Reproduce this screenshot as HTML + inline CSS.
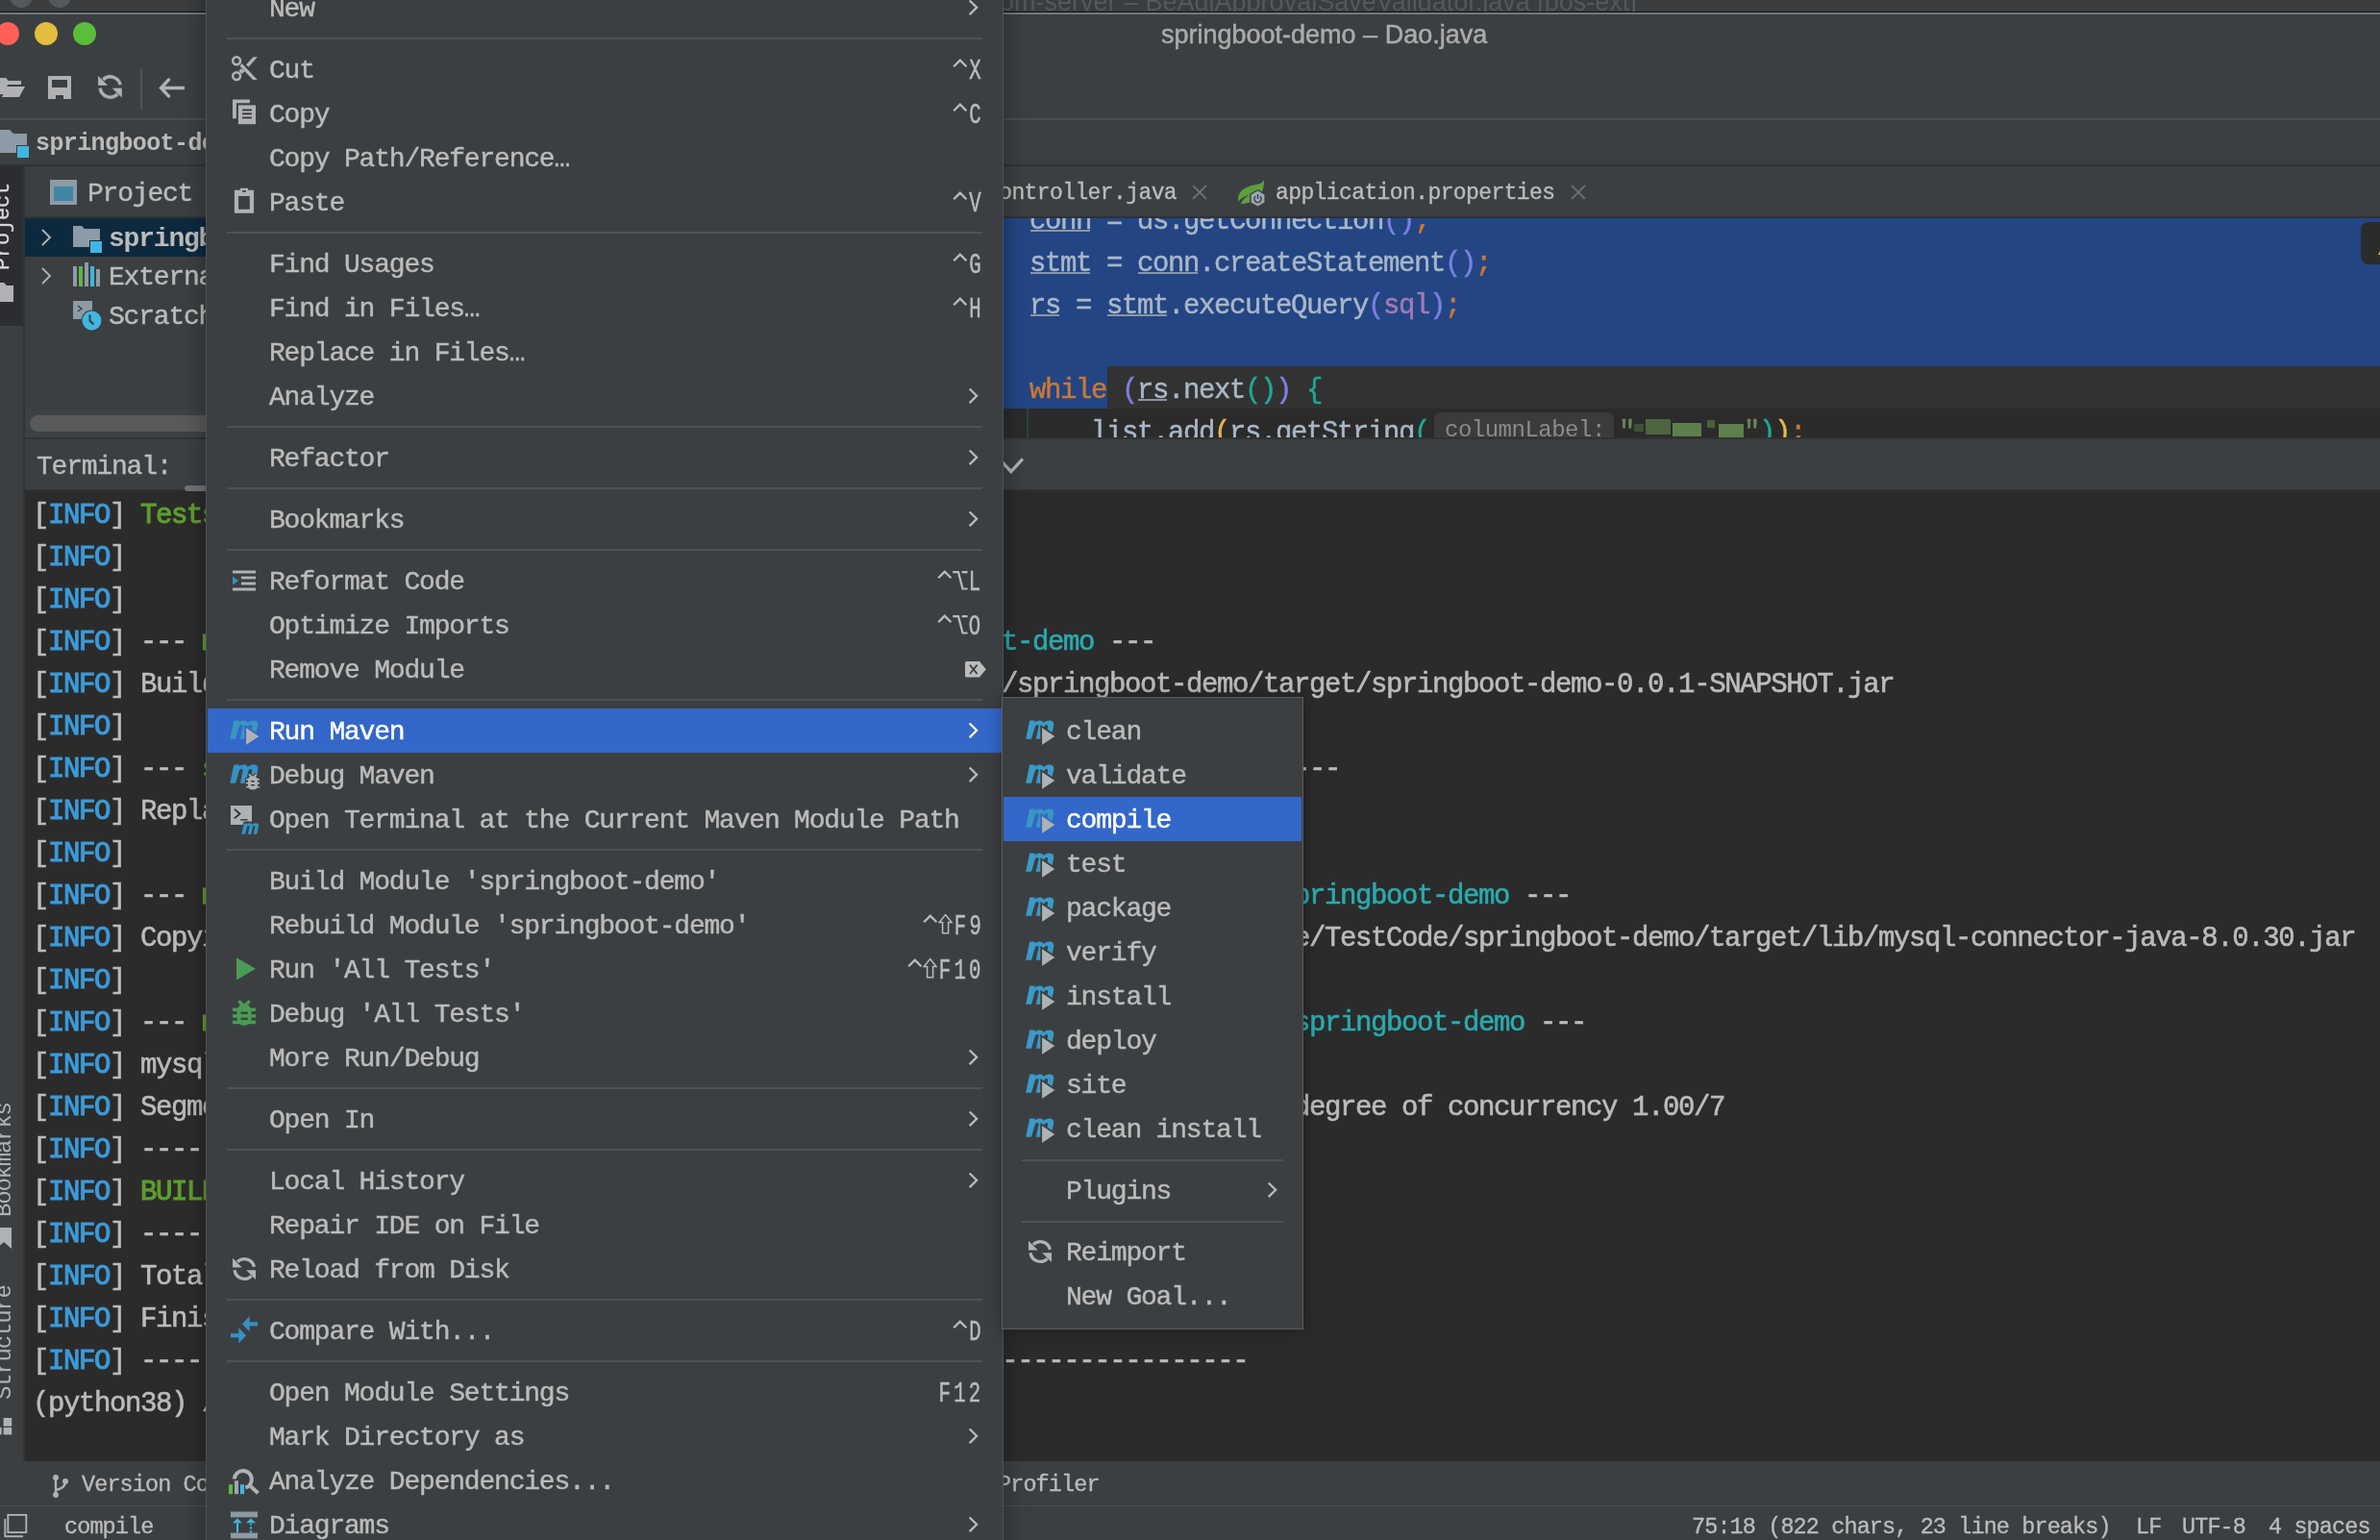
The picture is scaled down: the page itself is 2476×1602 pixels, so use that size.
<!DOCTYPE html><html><head><meta charset="utf-8"><title>IDE</title><style>
*{margin:0;padding:0;box-sizing:border-box}
html,body{width:2476px;height:1602px;overflow:hidden;background:#3C3F41}
body{position:relative;font-family:"Liberation Mono",monospace;color:#BBBBBB;-webkit-font-smoothing:antialiased}
.a{will-change:transform}
.a{position:absolute}
.sans{font-family:"Liberation Sans",sans-serif}
.mt{height:46px;line-height:46px;font-size:28px;letter-spacing:-1.2px;white-space:pre;padding-top:2px;-webkit-text-stroke:0.45px currentColor}
.tt{height:44px;line-height:44px;font-size:29px;letter-spacing:-1.4px;white-space:pre;color:#BBBBBB;padding-top:3.5px;-webkit-text-stroke:0.6px currentColor}
.et{height:44px;line-height:44px;font-size:29px;letter-spacing:-1.4px;white-space:pre;padding-top:4px;-webkit-text-stroke:0.45px currentColor}
.ib{color:#3C9AD9;-webkit-text-stroke:1.1px currentColor}
.gr{color:#5E9E2E;-webkit-text-stroke:1.1px currentColor}
.cy{color:#2AABAD}
.st{height:36px;line-height:36px;font-size:23.5px;letter-spacing:-0.9px;white-space:pre;color:#BBBBBB;-webkit-text-stroke:0.35px currentColor}
</style></head><body>
<div class="a" style="left:0;top:0;width:2476px;height:12px;background:#3A3C3E;overflow:hidden"><div class="a" style="left:10px;top:-16px;width:24px;height:24px;border-radius:50%;background:#55585A"></div><div class="a" style="left:50px;top:-16px;width:24px;height:24px;border-radius:50%;background:#55585A"></div><div class="a sans" style="left:1040px;top:-13px;font-size:27px;color:#55585A;white-space:pre">om-server – BeAdjApprovalSaveValidator.java [pos-ext]</div></div>
<div class="a" style="left:0;top:12px;width:2476px;height:1px;background:#141414"></div>
<div class="a" style="left:0;top:13px;width:2476px;height:2px;background:#76787A"></div>
<div class="a" style="left:-4px;top:23px;width:24px;height:24px;border-radius:50%;background:#FE5F57"></div>
<div class="a" style="left:36px;top:23px;width:24px;height:24px;border-radius:50%;background:#E4BC3F"></div>
<div class="a" style="left:76px;top:23px;width:24px;height:24px;border-radius:50%;background:#59BF3B"></div>
<div class="a sans" style="left:1208px;top:19.5px;font-size:27px;line-height:32px;color:#ABABAB;white-space:pre;-webkit-text-stroke:0.5px currentColor">springboot-demo – Dao.java</div>
<div class="a" style="left:0;top:79px;width:28px;height:24px"><svg width="28" height="24" viewBox="0 0 28 24"><path d="M-4,2 H6 L9,5 H22 V9 H8 L4,19 H-4Z" fill="#AFB1B3"/><path d="M2,22 L7,11 H26 L20,22Z" fill="#AFB1B3"/></svg></div>
<div class="a" style="left:50px;top:79px;width:25px;height:25px"><svg width="25" height="25" viewBox="0 0 25 25"><path d="M0,0 H24 V24 H0Z M4,4 V12 H20 V4Z M8,20 V24 H16 V20Z" fill="#AFB1B3" fill-rule="evenodd"/></svg></div>
<div class="a" style="left:98px;top:73.5px;width:32px;height:32px;transform:scale(1.03);transform-origin:4px 5px"><svg width="32" height="32" viewBox="0 0 32 32"><g fill="none" stroke="#AFB1B3" stroke-width="3.3"><path d="M9.0,8.7 A10.3,10.3 0 0 1 26.4,13.9"/><path d="M6.07,17.2 A10.3,10.3 0 0 0 23.6,23.3"/></g><path d="M4,4.8 L4,14.6 L13.8,14.6Z M28,17.3 L28,27 L18.1,17.3Z" fill="#AFB1B3"/></svg></div>
<div class="a" style="left:146px;top:71px;width:2px;height:44px;background:#515355"></div>
<div class="a" style="left:165px;top:80px;width:28px;height:23px"><svg width="28" height="23" viewBox="0 0 28 23"><path d="M11.5,1.8 L2.5,11.5 L11.5,21.2 M3,11.5 H27" fill="none" stroke="#AFB1B3" stroke-width="3.4"/></svg></div>
<div class="a" style="left:0;top:123px;width:2476px;height:2px;background:#4A4C4E"></div>
<div class="a" style="left:0;top:171px;width:2476px;height:2px;background:#2F3133"></div>
<div class="a" style="left:0;top:135px;width:30px;height:30px"><svg width="30" height="30" viewBox="0 0 30 30"><path d="M-2,0 H10 L14,4 H28 V24 H-2Z" fill="#8C9BA5"/><rect x="17" y="16" width="13" height="13" fill="#3C3F41"/><rect x="18" y="17" width="12" height="12" fill="#40B6E0"/></svg></div>
<div class="a" style="left:37px;top:131px;height:38px;line-height:38px;font-size:25px;font-weight:bold;letter-spacing:-0.6px;white-space:pre;color:#BBBBBB">springboot-demo</div>
<div class="a" style="left:0;top:173px;width:24px;height:1347px;background:#3C3F41"></div>
<div class="a" style="left:0;top:173px;width:24px;height:166px;background:#2B2D30"></div>
<div class="a" style="left:24px;top:173px;width:2px;height:1347px;background:#313335"></div>
<div class="a" style="left:-6px;top:281px;width:0;height:0"><div style="transform:rotate(-90deg);transform-origin:0 0;font-size:22px;letter-spacing:-0.2px;white-space:pre;color:#D8D8D8;line-height:20px;-webkit-text-stroke:0.3px currentColor">Project</div></div>
<div class="a" style="left:0;top:294px;width:14px;height:20px"><svg width="14" height="20"><path d="M-2,0 H4 L7,3 H14 V20 H-2Z" fill="#AFB1B3"/></svg></div>
<div class="a" style="left:-3px;top:1266px;width:0;height:0"><div style="transform:rotate(-90deg);transform-origin:0 0;font-size:24px;letter-spacing:-1.2px;white-space:pre;color:#AFB1B3;line-height:16px;">Bookmarks</div></div>
<div class="a" style="left:0;top:1277px;width:12px;height:22px"><svg width="12" height="22"><path d="M-4,0 H12 V22 L4,15 L-4,22Z" fill="#AFB1B3"/></svg></div>
<div class="a" style="left:-3px;top:1456px;width:0;height:0"><div style="transform:rotate(-90deg);transform-origin:0 0;font-size:24px;letter-spacing:-1.2px;white-space:pre;color:#AFB1B3;line-height:16px;">Structure</div></div>
<div class="a" style="left:0;top:1462px;width:14px;height:32px"><svg width="14" height="32"><rect x="3.6" y="13" width="8.6" height="8.7" fill="#AFB1B3"/><rect x="-6" y="23" width="7.7" height="7.4" fill="#AFB1B3"/><rect x="3.6" y="23" width="8.6" height="7.4" fill="#AFB1B3"/></svg></div>
<div class="a" style="left:26px;top:173px;width:1100px;height:282px;background:#3C3F41"></div>
<div class="a" style="left:52px;top:187px;width:28px;height:26px"><svg width="28" height="26"><rect x="0" y="0" width="28" height="26" fill="#8C9BA5"/><rect x="4" y="7" width="20" height="15" fill="#3F86A5"/></svg></div>
<div class="a mt" style="left:91px;top:177px;">Project</div>
<div class="a" style="left:26px;top:225px;width:1100px;height:2px;background:#323436"></div>
<div class="a" style="left:26px;top:227px;width:1100px;height:40px;background:#0D293E"></div>
<div class="a" style="left:42px;top:237px;width:14px;height:22px"><svg width="14" height="22"><path d="M2,2 L10,10 L2,18" fill="none" stroke="#AFB1B3" stroke-width="1.9"/></svg></div>
<div class="a" style="left:76px;top:235px;width:32px;height:28px"><svg width="32" height="28"><path d="M0,0 H9 L12,3 H28 V22 H0Z" fill="#8C9BA5"/><rect x="17" y="15" width="15" height="13" fill="#0D293E"/><rect x="18" y="16" width="12" height="12" fill="#40B6E0"/></svg></div>
<div class="a" style="left:113px;top:227px;height:40px;line-height:40px;font-size:28px;font-weight:bold;letter-spacing:-1.2px;white-space:pre;color:#BBBBBB;padding-top:2px">springboot-demo</div>
<div class="a" style="left:42px;top:277px;width:14px;height:22px"><svg width="14" height="22"><path d="M2,2 L10,10 L2,18" fill="none" stroke="#AFB1B3" stroke-width="1.9"/></svg></div>
<div class="a" style="left:76px;top:273px;width:30px;height:26px"><svg width="30" height="26"><rect x="0" y="4" width="4" height="21" fill="#8C9BA5"/><rect x="6" y="4" width="4" height="21" fill="#62B543"/><rect x="12" y="0" width="4" height="25" fill="#8C9BA5"/><rect x="18" y="4" width="4" height="21" fill="#40B6E0"/><rect x="24" y="7" width="4" height="18" fill="#8C9BA5"/></svg></div>
<div class="a mt" style="left:113px;top:264px;">External Libraries</div>
<div class="a" style="left:76px;top:313px;width:32px;height:32px"><svg width="32" height="32"><rect x="0" y="0" width="20" height="19" fill="#8C9BA5"/><path d="M5,5 L9,8 L5,11" fill="none" stroke="#3C3F41" stroke-width="1.3"/><circle cx="19.5" cy="20.5" r="11" fill="#3C3F41"/><circle cx="19.5" cy="20.5" r="10" fill="#40B6E0"/><path d="M17.5,14.5 V20.5 L21.5,24.5" fill="none" stroke="#3C3F41" stroke-width="2"/></svg></div>
<div class="a mt" style="left:113px;top:305px;">Scratches and Consoles</div>
<div class="a" style="left:26px;top:427px;width:1100px;height:28px;background:#3E4143"></div>
<div class="a" style="left:31px;top:432px;width:1000px;height:17px;border-radius:9px;background:#57595B"></div>
<div class="a" style="left:1044px;top:173px;width:1432px;height:52px;background:#3C3F41"></div>
<div class="a" style="left:1026px;top:181px;height:40px;line-height:40px;font-size:23px;letter-spacing:-0.6px;white-space:pre;color:#BBBBBB;-webkit-text-stroke:0.35px currentColor">Controller.java</div>
<div class="a" style="left:1240px;top:192px;width:16px;height:16px"><svg width="16" height="16"><path d="M1,1 L15,15 M15,1 L1,15" stroke="#6E6E6E" stroke-width="1.8"/></svg></div>
<div class="a" style="left:1287px;top:186px;width:32px;height:32px"><svg width="32" height="32" viewBox="0 0 32 32"><path d="M28,1 C26,7 16,5 8,10 C1,14 0.5,20 1.5,24 C4,19.5 9,17.5 13,16.5 C8,19.5 5,22.5 4,26 C15,26 29,19 28,1Z" fill="#5E9E3C"/><path d="M21.5,11 L29.8,15.8 V25.4 L21.5,30.2 L13.2,25.4 V15.8Z" fill="#3C3F41"/><path d="M21.5,12.6 L28.4,16.6 V24.6 L21.5,28.6 L14.6,24.6 V16.6Z" fill="#9AA7B0"/><path d="M19,18.3 A3.6,3.6 0 1 0 24,18.3" fill="none" stroke="#3C3F41" stroke-width="1.4"/><path d="M21.5,16 V21" stroke="#3C3F41" stroke-width="1.4"/></svg></div>
<div class="a" style="left:1327px;top:181px;height:40px;line-height:40px;font-size:23px;letter-spacing:-0.6px;white-space:pre;color:#BBBBBB;-webkit-text-stroke:0.35px currentColor">application.properties</div>
<div class="a" style="left:1634px;top:192px;width:16px;height:16px"><svg width="16" height="16"><path d="M1,1 L15,15 M15,1 L1,15" stroke="#6E6E6E" stroke-width="1.8"/></svg></div>
<div class="a" style="left:1044px;top:225px;width:1432px;height:2px;background:#2F3133"></div>
<div class="a" style="left:1044px;top:227px;width:1432px;height:228px;background:#2B2B2B;overflow:hidden">
<div class="a" style="left:0;top:0;width:1432px;height:154px;background:#234584"></div>
<div class="a" style="left:108px;top:154px;width:1324px;height:44px;background:#323232"></div>
<div class="a" style="left:0;top:154px;width:108px;height:44px;background:#234584"></div>
<div class="a" style="left:24px;top:198px;width:2px;height:30px;background:#2B4440"></div>
<div class="a" style="left:1412px;top:4px;width:40px;height:44px;border-radius:8px;background:#2B2B2B"></div>
<div class="a" style="left:1430px;top:30px;width:8px;height:8px;background:#E8B537;clip-path:polygon(50% 0,100% 100%,0 100%)"></div>
<div class="a" style="left:448px;top:202px;width:187px;height:40px;border-radius:6px;background:#3B3B3B"></div>
</div>
<div class="a" style="left:1044px;top:227px;width:1432px;height:228px;overflow:hidden"><div class="a" style="left:-1044px;top:-227px;width:2476px;height:1602px">
<div class="a et" style="left:1071px;top:205px;color:#A9B7C6">conn</div>
<div class="a" style="left:1072px;top:239px;width:62px;height:2px;background:#8A96A3"></div>
<div class="a et" style="left:1151px;top:205px;color:#A9B7C6">=</div>
<div class="a et" style="left:1183px;top:205px;color:#A9B7C6">ds.getConnection</div>
<div class="a et" style="left:1439px;top:205px;color:#7C7FE0">()</div>
<div class="a et" style="left:1471px;top:205px;color:#CC7832">;</div>
<div class="a et" style="left:1071px;top:249px;color:#A9B7C6">stmt</div>
<div class="a" style="left:1072px;top:283px;width:62px;height:2px;background:#8A96A3"></div>
<div class="a et" style="left:1151px;top:249px;color:#A9B7C6">=</div>
<div class="a et" style="left:1183px;top:249px;color:#A9B7C6">conn</div>
<div class="a" style="left:1184px;top:283px;width:62px;height:2px;background:#8A96A3"></div>
<div class="a et" style="left:1247px;top:249px;color:#A9B7C6">.createStatement</div>
<div class="a et" style="left:1503px;top:249px;color:#7C7FE0">()</div>
<div class="a et" style="left:1535px;top:249px;color:#CC7832">;</div>
<div class="a et" style="left:1071px;top:293px;color:#A9B7C6">rs</div>
<div class="a" style="left:1072px;top:327px;width:30px;height:2px;background:#8A96A3"></div>
<div class="a et" style="left:1119px;top:293px;color:#A9B7C6">=</div>
<div class="a et" style="left:1151px;top:293px;color:#A9B7C6">stmt</div>
<div class="a" style="left:1152px;top:327px;width:62px;height:2px;background:#8A96A3"></div>
<div class="a et" style="left:1215px;top:293px;color:#A9B7C6">.executeQuery</div>
<div class="a et" style="left:1423px;top:293px;color:#7C7FE0">(</div>
<div class="a et" style="left:1439px;top:293px;color:#A27BB2">sql</div>
<div class="a et" style="left:1487px;top:293px;color:#7C7FE0">)</div>
<div class="a et" style="left:1503px;top:293px;color:#CC7832">;</div>
<div class="a et" style="left:1071px;top:381px;color:#CC7832">while</div>
<div class="a et" style="left:1167px;top:381px;color:#7C7FE0">(</div>
<div class="a et" style="left:1183px;top:381px;color:#A9B7C6">rs</div>
<div class="a" style="left:1184px;top:415px;width:30px;height:2px;background:#8A96A3"></div>
<div class="a et" style="left:1215px;top:381px;color:#A9B7C6">.next</div>
<div class="a et" style="left:1295px;top:381px;color:#1FA896">()</div>
<div class="a et" style="left:1327px;top:381px;color:#7C7FE0">)</div>
<div class="a et" style="left:1359px;top:381px;color:#1FA896">{</div>
<div class="a et" style="left:1135px;top:425px;color:#A9B7C6">list.add</div>
<div class="a et" style="left:1263px;top:425px;color:#E3B94E">(</div>
<div class="a et" style="left:1279px;top:425px;color:#A9B7C6">rs.getString</div>
<div class="a et" style="left:1471px;top:425px;color:#1FA896">(</div>
<div class="a" style="left:1503px;top:423px;height:44px;line-height:44px;font-size:24px;letter-spacing:-0.5px;white-space:pre;color:#8C8C8C;padding-top:3px">columnLabel:</div>
<div class="a et" style="left:1684px;top:425px;color:#6A8759">"</div>
<div class="a" style="left:1700px;top:441px;width:10px;height:8px;background:#3F5237"></div><div class="a" style="left:1712px;top:436px;width:26px;height:16px;background:#4D6640"></div><div class="a" style="left:1740px;top:440px;width:30px;height:14px;background:#5E7F4C"></div><div class="a" style="left:1776px;top:437px;width:8px;height:8px;background:#4A603D"></div><div class="a" style="left:1788px;top:441px;width:26px;height:14px;background:#5E7F4C"></div>
<div class="a et" style="left:1814px;top:425px;color:#6A8759">"</div>
<div class="a et" style="left:1830px;top:425px;color:#1FA896">)</div>
<div class="a et" style="left:1846px;top:425px;color:#E3B94E">)</div>
<div class="a et" style="left:1862px;top:425px;color:#CC7832">;</div>
</div></div>
<div class="a" style="left:26px;top:455px;width:2450px;height:2px;background:#323232"></div>
<div class="a" style="left:26px;top:457px;width:2450px;height:52px;background:#3C3F41"></div>
<div class="a mt" style="left:38px;top:461px;">Terminal:</div>
<div class="a" style="left:1036px;top:472px;width:32px;height:24px"><svg width="32" height="24"><path d="M3.6,5.3 L15.8,18.6 L28,5.3" fill="none" stroke="#AFB1B3" stroke-width="3.2"/></svg></div>
<div class="a" style="left:26px;top:509px;width:2450px;height:1011px;background:#2B2B2B"></div>
<div class="a" style="left:26px;top:509px;width:2450px;height:2px;background:#303030"></div>
<div class="a" style="left:192px;top:505px;width:200px;height:6px;border-radius:3px;background:#6F737A"></div>
<div class="a tt " style="left:34px;top:511.4px">[</div>
<div class="a tt ib" style="left:50px;top:511.4px">INFO</div>
<div class="a tt " style="left:114px;top:511.4px">] </div>
<div class="a tt gr" style="left:146px;top:511.4px">Tests are skipped.</div>
<div class="a tt " style="left:34px;top:555.4px">[</div>
<div class="a tt ib" style="left:50px;top:555.4px">INFO</div>
<div class="a tt " style="left:114px;top:555.4px">]</div>
<div class="a tt " style="left:34px;top:599.4px">[</div>
<div class="a tt ib" style="left:50px;top:599.4px">INFO</div>
<div class="a tt " style="left:114px;top:599.4px">]</div>
<div class="a tt " style="left:34px;top:643.4px">[</div>
<div class="a tt ib" style="left:50px;top:643.4px">INFO</div>
<div class="a tt " style="left:114px;top:643.4px">] --- </div>
<div class="a tt gr" style="left:210px;top:643.4px">maven-jar-plugin:3.2.2:jar</div>
<div class="a tt " style="left:626px;top:643.4px"> (default-jar) @ </div>
<div class="a tt cy" style="left:898px;top:643.4px">springboot-demo</div>
<div class="a tt " style="left:1138px;top:643.4px"> ---</div>
<div class="a tt " style="left:34px;top:687.4px">[</div>
<div class="a tt ib" style="left:50px;top:687.4px">INFO</div>
<div class="a tt " style="left:114px;top:687.4px">] Building jar: /Users/xxxxxxxxx/TestCode/springboot-demo/</div>
<div class="a tt " style="left:1042px;top:687.4px">/springboot-demo/target/springboot-demo-0.0.1-SNAPSHOT.jar</div>
<div class="a tt " style="left:34px;top:731.4px">[</div>
<div class="a tt ib" style="left:50px;top:731.4px">INFO</div>
<div class="a tt " style="left:114px;top:731.4px">]</div>
<div class="a tt " style="left:34px;top:775.4px">[</div>
<div class="a tt ib" style="left:50px;top:775.4px">INFO</div>
<div class="a tt " style="left:114px;top:775.4px">] --- </div>
<div class="a tt gr" style="left:210px;top:775.4px">spring-boot-maven-plugin:2.7.5:repackage</div>
<div class="a tt " style="left:850px;top:775.4px"> (repackage) @ </div>
<div class="a tt cy" style="left:1090px;top:775.4px">springboot-demo</div>
<div class="a tt " style="left:1330px;top:775.4px"> ---</div>
<div class="a tt " style="left:34px;top:819.4px">[</div>
<div class="a tt ib" style="left:50px;top:819.4px">INFO</div>
<div class="a tt " style="left:114px;top:819.4px">] Replacing main artifact with repackaged archive</div>
<div class="a tt " style="left:34px;top:863.4px">[</div>
<div class="a tt ib" style="left:50px;top:863.4px">INFO</div>
<div class="a tt " style="left:114px;top:863.4px">]</div>
<div class="a tt " style="left:34px;top:907.4px">[</div>
<div class="a tt ib" style="left:50px;top:907.4px">INFO</div>
<div class="a tt " style="left:114px;top:907.4px">] --- </div>
<div class="a tt gr" style="left:210px;top:907.4px">maven-dependency-plugin:3.3.0:copy-dependencies</div>
<div class="a tt " style="left:962px;top:907.4px"> (copy) @ </div>
<div class="a tt cy" style="left:1330px;top:907.4px">springboot-demo</div>
<div class="a tt " style="left:1570px;top:907.4px"> ---</div>
<div class="a tt " style="left:34px;top:951.4px">[</div>
<div class="a tt ib" style="left:50px;top:951.4px">INFO</div>
<div class="a tt " style="left:114px;top:951.4px">] Copying mysql-connector-java-8.0.30.jar to /Users/xxxx/Cod</div>
<div class="a tt " style="left:1346px;top:951.4px">e/TestCode/springboot-demo/target/lib/mysql-connector-java-8.0.30.jar</div>
<div class="a tt " style="left:34px;top:995.4px">[</div>
<div class="a tt ib" style="left:50px;top:995.4px">INFO</div>
<div class="a tt " style="left:114px;top:995.4px">]</div>
<div class="a tt " style="left:34px;top:1039.4px">[</div>
<div class="a tt ib" style="left:50px;top:1039.4px">INFO</div>
<div class="a tt " style="left:114px;top:1039.4px">] --- </div>
<div class="a tt gr" style="left:210px;top:1039.4px">maven-install-plugin:2.5.2:install</div>
<div class="a tt " style="left:754px;top:1039.4px"> (default) @ </div>
<div class="a tt cy" style="left:1346px;top:1039.4px">springboot-demo</div>
<div class="a tt " style="left:1586px;top:1039.4px"> ---</div>
<div class="a tt " style="left:34px;top:1083.4px">[</div>
<div class="a tt ib" style="left:50px;top:1083.4px">INFO</div>
<div class="a tt " style="left:114px;top:1083.4px">] mysql-connector-java-8.0.30.jar</div>
<div class="a tt " style="left:34px;top:1127.4px">[</div>
<div class="a tt ib" style="left:50px;top:1127.4px">INFO</div>
<div class="a tt " style="left:114px;top:1127.4px">] Segments: 4</div>
<div class="a tt " style="left:1346px;top:1127.4px">degree of concurrency 1.00/7</div>
<div class="a tt " style="left:34px;top:1171.4px">[</div>
<div class="a tt ib" style="left:50px;top:1171.4px">INFO</div>
<div class="a tt " style="left:114px;top:1171.4px">] ------------------------------------------------------------------------</div>
<div class="a tt " style="left:34px;top:1215.4px">[</div>
<div class="a tt ib" style="left:50px;top:1215.4px">INFO</div>
<div class="a tt " style="left:114px;top:1215.4px">] </div>
<div class="a tt gr" style="left:146px;top:1215.4px">BUILD SUCCESS</div>
<div class="a tt " style="left:34px;top:1259.4px">[</div>
<div class="a tt ib" style="left:50px;top:1259.4px">INFO</div>
<div class="a tt " style="left:114px;top:1259.4px">] ------------------------------------------------------------------------</div>
<div class="a tt " style="left:34px;top:1303.4px">[</div>
<div class="a tt ib" style="left:50px;top:1303.4px">INFO</div>
<div class="a tt " style="left:114px;top:1303.4px">] Total time:  3.214 s</div>
<div class="a tt " style="left:34px;top:1347.4px">[</div>
<div class="a tt ib" style="left:50px;top:1347.4px">INFO</div>
<div class="a tt " style="left:114px;top:1347.4px">] Finished at: 2022-11-10T16:02:11+08:00</div>
<div class="a tt " style="left:34px;top:1391.4px">[</div>
<div class="a tt ib" style="left:50px;top:1391.4px">INFO</div>
<div class="a tt " style="left:114px;top:1391.4px">] ------------------------------------------------------------------------</div>
<div class="a tt " style="left:34px;top:1435.4px">(python38) /Users/xx/TestCode/springboot-demo</div>
<div class="a" style="left:0;top:1520px;width:2476px;height:46px;background:#3C3F41"></div>
<div class="a" style="left:0;top:1566px;width:2476px;height:1px;background:#4A4C4E"></div>
<div class="a" style="left:0;top:1567px;width:2476px;height:35px;background:#3C3F41"></div>
<div class="a" style="left:54px;top:1533px;width:18px;height:26px"><svg width="18" height="26"><g fill="#AFB1B3"><circle cx="4" cy="4" r="3"/><circle cx="4" cy="22" r="3"/><circle cx="14" cy="8" r="3"/></g><path d="M4,4 V22 M14,8 Q14,15 4,17" fill="none" stroke="#AFB1B3" stroke-width="2.4"/></svg></div>
<div class="a st" style="left:85px;top:1527px;">Version Control</div>
<div class="a st" style="left:1038px;top:1527px;">Profiler</div>
<div class="a" style="left:0;top:1572px;width:32px;height:30px"><svg width="32" height="30"><rect x="8.3" y="3.9" width="19" height="18.2" fill="none" stroke="#AFB1B3" stroke-width="1.9"/><path d="M5.3,8 V26.3 H24" fill="none" stroke="#AFB1B3" stroke-width="1.9"/></svg></div>
<div class="a st" style="left:67px;top:1571px;">compile</div>
<div class="a st" style="left:1760px;top:1571px;">75:18 (822 chars, 23 line breaks)</div>
<div class="a st" style="left:2222px;top:1571px;">LF</div>
<div class="a st" style="left:2270px;top:1571px;">UTF-8</div>
<div class="a st" style="left:2360px;top:1571px;">4 spaces</div>
<div class="a" style="left:214px;top:-20px;width:830px;height:1650px;background:#3C3F41;border-left:1px solid #505252;border-right:1px solid #505252;box-shadow:0 0 22px 2px rgba(0,0,0,0.30)"></div>
<div class="a mt" style="left:280px;top:-15.2px;color:#BBBBBB">New</div>
<div class="a" style="left:1004px;top:-8.2px;width:16px;height:32px"><svg width="16" height="32" viewBox="0 0 16 32"><path d="M4.7,8.5 L12.1,15.8 L4.7,23.1" fill="none" stroke="#BBBBBB" stroke-width="2.3"/></svg></div>
<div class="a" style="left:236px;top:39.4px;width:786px;height:2px;background:#515151"></div>
<div class="a mt" style="left:280px;top:48.8px;color:#BBBBBB">Cut</div>
<div class="a" style="left:238px;top:55.8px;width:32px;height:32px"><svg width="32" height="32" viewBox="0 0 32 32"><g fill="none" stroke="#AFB1B3" stroke-width="2.6"><circle cx="8.1" cy="7.2" r="3.9"/><circle cx="8.1" cy="23.1" r="3.9"/></g><path d="M13.6,9.9 L29.8,27 L25,27 L11.5,12.7Z M18,11.2 L25.5,3.3 L29.8,3.3 L20.6,13.8Z M10.5,17.4 L12.8,15.3 L16.7,18.2 L13.3,21Z" fill="#AFB1B3"/></svg></div>
<div class="a" style="left:990.8px;top:59.8px;width:35px;height:24px"><svg width="35" height="24"><path d="M1.2,9.2 L7.8,2.6 L14.4,9.2" fill="none" stroke="#BBBBBB" stroke-width="2.3"/><text x="23.4" y="21.5" text-anchor="middle" font-family="Liberation Mono" font-size="29" fill="#BBBBBB" stroke="#BBBBBB" stroke-width="0.5" textLength="12.4" lengthAdjust="spacingAndGlyphs">X</text></svg></div>
<div class="a mt" style="left:280px;top:94.8px;color:#BBBBBB">Copy</div>
<div class="a" style="left:238px;top:101.8px;width:32px;height:32px"><svg width="32" height="32" viewBox="0 0 32 32"><path d="M4,1.4 H21.9 V5.3 H7.9 V21.3 H4Z" fill="#AFB1B3"/><rect x="9.9" y="7.4" width="18.1" height="19.8" fill="#AFB1B3"/><g fill="#2B2D2F"><rect x="14.1" y="11.6" width="9.7" height="1.7"/><rect x="14.1" y="15.5" width="9.7" height="1.7"/><rect x="14.1" y="19.6" width="9.7" height="1.7"/></g></svg></div>
<div class="a" style="left:990.8px;top:105.8px;width:35px;height:24px"><svg width="35" height="24"><path d="M1.2,9.2 L7.8,2.6 L14.4,9.2" fill="none" stroke="#BBBBBB" stroke-width="2.3"/><text x="23.4" y="21.5" text-anchor="middle" font-family="Liberation Mono" font-size="29" fill="#BBBBBB" stroke="#BBBBBB" stroke-width="0.5" textLength="12.4" lengthAdjust="spacingAndGlyphs">C</text></svg></div>
<div class="a mt" style="left:280px;top:140.8px;color:#BBBBBB">Copy Path/Reference…</div>
<div class="a mt" style="left:280px;top:186.8px;color:#BBBBBB">Paste</div>
<div class="a" style="left:238px;top:193.8px;width:32px;height:32px"><svg width="32" height="32" viewBox="0 0 32 32"><path d="M5.9,3.8 H11.9 V1.8 H20.1 V3.8 H26.05 V27.8 H5.9Z M10.1,10 V23.65 H21.8 V10Z" fill="#AFB1B3" fill-rule="evenodd"/><rect x="14.1" y="4.2" width="3.8" height="1.5" fill="#2B2D2F"/></svg></div>
<div class="a" style="left:990.8px;top:197.8px;width:35px;height:24px"><svg width="35" height="24"><path d="M1.2,9.2 L7.8,2.6 L14.4,9.2" fill="none" stroke="#BBBBBB" stroke-width="2.3"/><text x="23.4" y="21.5" text-anchor="middle" font-family="Liberation Mono" font-size="29" fill="#BBBBBB" stroke="#BBBBBB" stroke-width="0.5" textLength="12.4" lengthAdjust="spacingAndGlyphs">V</text></svg></div>
<div class="a" style="left:236px;top:241.4px;width:786px;height:2px;background:#515151"></div>
<div class="a mt" style="left:280px;top:250.8px;color:#BBBBBB">Find Usages</div>
<div class="a" style="left:990.8px;top:261.8px;width:35px;height:24px"><svg width="35" height="24"><path d="M1.2,9.2 L7.8,2.6 L14.4,9.2" fill="none" stroke="#BBBBBB" stroke-width="2.3"/><text x="23.4" y="21.5" text-anchor="middle" font-family="Liberation Mono" font-size="29" fill="#BBBBBB" stroke="#BBBBBB" stroke-width="0.5" textLength="12.4" lengthAdjust="spacingAndGlyphs">G</text></svg></div>
<div class="a mt" style="left:280px;top:296.8px;color:#BBBBBB">Find in Files…</div>
<div class="a" style="left:990.8px;top:307.8px;width:35px;height:24px"><svg width="35" height="24"><path d="M1.2,9.2 L7.8,2.6 L14.4,9.2" fill="none" stroke="#BBBBBB" stroke-width="2.3"/><text x="23.4" y="21.5" text-anchor="middle" font-family="Liberation Mono" font-size="29" fill="#BBBBBB" stroke="#BBBBBB" stroke-width="0.5" textLength="12.4" lengthAdjust="spacingAndGlyphs">H</text></svg></div>
<div class="a mt" style="left:280px;top:342.8px;color:#BBBBBB">Replace in Files…</div>
<div class="a mt" style="left:280px;top:388.8px;color:#BBBBBB">Analyze</div>
<div class="a" style="left:1004px;top:395.8px;width:16px;height:32px"><svg width="16" height="32" viewBox="0 0 16 32"><path d="M4.7,8.5 L12.1,15.8 L4.7,23.1" fill="none" stroke="#BBBBBB" stroke-width="2.3"/></svg></div>
<div class="a" style="left:236px;top:443.4px;width:786px;height:2px;background:#515151"></div>
<div class="a mt" style="left:280px;top:452.8px;color:#BBBBBB">Refactor</div>
<div class="a" style="left:1004px;top:459.8px;width:16px;height:32px"><svg width="16" height="32" viewBox="0 0 16 32"><path d="M4.7,8.5 L12.1,15.8 L4.7,23.1" fill="none" stroke="#BBBBBB" stroke-width="2.3"/></svg></div>
<div class="a" style="left:236px;top:507.4px;width:786px;height:2px;background:#515151"></div>
<div class="a mt" style="left:280px;top:516.8px;color:#BBBBBB">Bookmarks</div>
<div class="a" style="left:1004px;top:523.8px;width:16px;height:32px"><svg width="16" height="32" viewBox="0 0 16 32"><path d="M4.7,8.5 L12.1,15.8 L4.7,23.1" fill="none" stroke="#BBBBBB" stroke-width="2.3"/></svg></div>
<div class="a" style="left:236px;top:571.4px;width:786px;height:2px;background:#515151"></div>
<div class="a mt" style="left:280px;top:580.8px;color:#BBBBBB">Reformat Code</div>
<div class="a" style="left:238px;top:587.8px;width:32px;height:32px"><svg width="32" height="32" viewBox="0 0 32 32"><g fill="#AFB1B3"><rect x="4" y="5.5" width="24" height="3"/><rect x="12.9" y="11.6" width="15.1" height="2.8"/><rect x="12.9" y="17.6" width="15.1" height="2.9"/><rect x="4" y="23.5" width="24" height="3"/></g><path d="M4,11.6 L10.1,16.1 L4,20.5Z" fill="#3592C4"/></svg></div>
<div class="a" style="left:975.2px;top:591.8px;width:51px;height:24px"><svg width="51" height="24"><path d="M1.2,9.2 L7.8,2.6 L14.4,9.2" fill="none" stroke="#BBBBBB" stroke-width="2.3"/><path d="M16.2,3.2 H22.0 L26.5,20.5 H31.6 M25.6,3.2 H31.6" fill="none" stroke="#BBBBBB" stroke-width="2.2"/><text x="39.0" y="21.5" text-anchor="middle" font-family="Liberation Mono" font-size="29" fill="#BBBBBB" stroke="#BBBBBB" stroke-width="0.5" textLength="12.4" lengthAdjust="spacingAndGlyphs">L</text></svg></div>
<div class="a mt" style="left:280px;top:626.8px;color:#BBBBBB">Optimize Imports</div>
<div class="a" style="left:975.2px;top:637.8px;width:51px;height:24px"><svg width="51" height="24"><path d="M1.2,9.2 L7.8,2.6 L14.4,9.2" fill="none" stroke="#BBBBBB" stroke-width="2.3"/><path d="M16.2,3.2 H22.0 L26.5,20.5 H31.6 M25.6,3.2 H31.6" fill="none" stroke="#BBBBBB" stroke-width="2.2"/><text x="39.0" y="21.5" text-anchor="middle" font-family="Liberation Mono" font-size="29" fill="#BBBBBB" stroke="#BBBBBB" stroke-width="0.5" textLength="12.4" lengthAdjust="spacingAndGlyphs">O</text></svg></div>
<div class="a mt" style="left:280px;top:672.8px;color:#BBBBBB">Remove Module</div>
<div class="a" style="left:1003px;top:683.8px;width:26px;height:24px"><svg width="26" height="24"><path d="M2.5,4 H16 L22.8,12.3 L16,20.6 H2.5 Q1,20.6 1,19.1 V5.5 Q1,4 2.5,4Z" fill="#BBBBBB"/><path d="M6,7.6 L13.6,17 M13.6,7.6 L6,17" stroke="#3C3F41" stroke-width="1.8"/></svg></div>
<div class="a" style="left:236px;top:727.4px;width:786px;height:2px;background:#515151"></div>
<div class="a" style="left:216px;top:736.8px;width:826px;height:46px;background:#3367C9"></div>
<div class="a mt" style="left:280px;top:736.8px;color:#FFFFFF">Run Maven</div>
<div class="a" style="left:238px;top:743.8px;width:32px;height:32px"><svg width="32" height="32" viewBox="0 0 32 32"><g transform="translate(0.8,4.8) scale(2)"><path d="M0.2,10 L2.2,0.4 L5,0.4 L4.8,1.3 Q6,0.3 7.4,0.3 Q9.3,0.3 9.3,1.6 Q10.5,0.3 12.2,0.3 Q15.2,0.3 14.7,3 L13.2,10 L10.3,10 L11.6,3.8 Q11.9,2.6 10.9,2.6 Q10,2.6 9.7,3.8 L8.4,10 L5.5,10 L6.8,3.8 Q7.1,2.6 6.1,2.6 Q5.2,2.6 4.9,3.8 L3.1,10 Z" fill="#3A96C0"/></g><path d="M17.2,11.6 L33,22 L17.2,32.4Z" fill="#AFB1B3" stroke="#3367C9" stroke-width="1.8"/></svg></div>
<div class="a" style="left:1004px;top:743.8px;width:16px;height:32px"><svg width="16" height="32" viewBox="0 0 16 32"><path d="M4.7,8.5 L12.1,15.8 L4.7,23.1" fill="none" stroke="#FFFFFF" stroke-width="2.3"/></svg></div>
<div class="a mt" style="left:280px;top:782.8px;color:#BBBBBB">Debug Maven</div>
<div class="a" style="left:238px;top:789.8px;width:32px;height:32px"><svg width="32" height="32" viewBox="0 0 32 32"><g transform="translate(0.9,4.7) scale(2)"><path d="M0.2,10 L2.2,0.4 L5,0.4 L4.8,1.3 Q6,0.3 7.4,0.3 Q9.3,0.3 9.3,1.6 Q10.5,0.3 12.2,0.3 Q15.2,0.3 14.7,3 L13.2,10 L10.3,10 L11.6,3.8 Q11.9,2.6 10.9,2.6 Q10,2.6 9.7,3.8 L8.4,10 L5.5,10 L6.8,3.8 Q7.1,2.6 6.1,2.6 Q5.2,2.6 4.9,3.8 L3.1,10 Z" fill="#3592C4"/></g><path d="M20,22 Q20,17.2 25,17.2 Q30,17.2 30,22 V27 Q30,31.5 25,31.5 Q20,31.5 20,27Z" fill="#3C3F41" stroke="#3C3F41" stroke-width="3"/><path d="M20.9,15.4 L24.5,18.6 M29,15.4 L25.5,18.6" stroke="#3C3F41" stroke-width="4"/><rect x="17" y="19" width="16" height="11.4" fill="#3C3F41"/><path d="M20,22 Q20,17.2 25,17.2 Q30,17.2 30,22 V27 Q30,31.5 25,31.5 Q20,31.5 20,27Z" fill="#AFB1B3"/><path d="M20.9,15.4 L24.5,18.6 M29,15.4 L25.5,18.6" stroke="#AFB1B3" stroke-width="1.8"/><g fill="#AFB1B3"><rect x="18" y="19.9" width="14" height="1.7"/><rect x="18" y="23.8" width="14" height="1.7"/><rect x="18" y="27.9" width="14" height="1.5"/></g><g fill="#2B2D2F"><rect x="23.2" y="22" width="3.5" height="1.45"/><rect x="23.2" y="26" width="3.5" height="1.35"/></g></svg></div>
<div class="a" style="left:1004px;top:789.8px;width:16px;height:32px"><svg width="16" height="32" viewBox="0 0 16 32"><path d="M4.7,8.5 L12.1,15.8 L4.7,23.1" fill="none" stroke="#BBBBBB" stroke-width="2.3"/></svg></div>
<div class="a mt" style="left:280px;top:828.8px;color:#BBBBBB">Open Terminal at the Current Maven Module Path</div>
<div class="a" style="left:238px;top:835.8px;width:32px;height:32px"><svg width="32" height="32" viewBox="0 0 32 32"><path d="M2,1.9 H24 V18.6 H15.6 L14.6,21.9 H2Z" fill="#AFB1B3"/><rect x="12.2" y="16.2" width="7.4" height="1.3" fill="#2B2D2F"/><path d="M5.8,5.6 L11.5,10.5 L5.8,15.4" fill="none" stroke="#2B2D2F" stroke-width="1.8"/><g transform="translate(13.1,19.9) scale(1.22,1.19)"><path d="M0.2,10 L2.2,0.4 L5,0.4 L4.8,1.3 Q6,0.3 7.4,0.3 Q9.3,0.3 9.3,1.6 Q10.5,0.3 12.2,0.3 Q15.2,0.3 14.7,3 L13.2,10 L10.3,10 L11.6,3.8 Q11.9,2.6 10.9,2.6 Q10,2.6 9.7,3.8 L8.4,10 L5.5,10 L6.8,3.8 Q7.1,2.6 6.1,2.6 Q5.2,2.6 4.9,3.8 L3.1,10 Z" fill="#3592C4" stroke="#3C3F41" stroke-width="0.6" paint-order="stroke"/></g></svg></div>
<div class="a" style="left:236px;top:883.4px;width:786px;height:2px;background:#515151"></div>
<div class="a mt" style="left:280px;top:892.8px;color:#BBBBBB">Build Module &#x27;springboot-demo&#x27;</div>
<div class="a mt" style="left:280px;top:938.8px;color:#BBBBBB">Rebuild Module &#x27;springboot-demo&#x27;</div>
<div class="a" style="left:959.6px;top:949.8px;width:66px;height:24px"><svg width="66" height="24"><path d="M1.2,9.2 L7.8,2.6 L14.4,9.2" fill="none" stroke="#BBBBBB" stroke-width="2.3"/><path d="M23.6,1.6 L30.0,9.4 H26.6 V20.8 H20.6 V9.4 H17.2Z" fill="none" stroke="#BBBBBB" stroke-width="1.5"/><text x="39.0" y="21.5" text-anchor="middle" font-family="Liberation Mono" font-size="29" fill="#BBBBBB" stroke="#BBBBBB" stroke-width="0.5" textLength="12.4" lengthAdjust="spacingAndGlyphs">F</text><text x="54.6" y="21.5" text-anchor="middle" font-family="Liberation Mono" font-size="29" fill="#BBBBBB" stroke="#BBBBBB" stroke-width="0.5" textLength="12.4" lengthAdjust="spacingAndGlyphs">9</text></svg></div>
<div class="a mt" style="left:280px;top:984.8px;color:#BBBBBB">Run &#x27;All Tests&#x27;</div>
<div class="a" style="left:238px;top:991.8px;width:32px;height:32px"><svg width="32" height="32" viewBox="0 0 32 32"><path d="M8,4.2 L27.9,15.8 L8,27.4Z" fill="#499C54"/></svg></div>
<div class="a" style="left:944.0px;top:995.8px;width:82px;height:24px"><svg width="82" height="24"><path d="M1.2,9.2 L7.8,2.6 L14.4,9.2" fill="none" stroke="#BBBBBB" stroke-width="2.3"/><path d="M23.6,1.6 L30.0,9.4 H26.6 V20.8 H20.6 V9.4 H17.2Z" fill="none" stroke="#BBBBBB" stroke-width="1.5"/><text x="39.0" y="21.5" text-anchor="middle" font-family="Liberation Mono" font-size="29" fill="#BBBBBB" stroke="#BBBBBB" stroke-width="0.5" textLength="12.4" lengthAdjust="spacingAndGlyphs">F</text><text x="54.6" y="21.5" text-anchor="middle" font-family="Liberation Mono" font-size="29" fill="#BBBBBB" stroke="#BBBBBB" stroke-width="0.5" textLength="12.4" lengthAdjust="spacingAndGlyphs">1</text><text x="70.2" y="21.5" text-anchor="middle" font-family="Liberation Mono" font-size="29" fill="#BBBBBB" stroke="#BBBBBB" stroke-width="0.5" textLength="12.4" lengthAdjust="spacingAndGlyphs">0</text></svg></div>
<div class="a mt" style="left:280px;top:1030.8px;color:#BBBBBB">Debug &#x27;All Tests&#x27;</div>
<div class="a" style="left:238px;top:1037.8px;width:32px;height:32px"><svg width="32" height="32" viewBox="0 0 32 32"><g fill="#499C54"><path d="M10.5,9 A6.2,6 0 0 1 21.5,9 L23.6,12.5 V22 A7.6,8.2 0 0 1 8.6,22 V12.5Z"/><rect x="4" y="10.5" width="24" height="3.5"/><rect x="4" y="17.2" width="24" height="3.5"/><rect x="4" y="23.6" width="24" height="3.6"/><path d="M9,4.6 L11.3,2 L16,6.4 L20.7,2 L23,4.6 L17.5,9.5 H14.5Z"/></g><g fill="#3C3F41"><rect x="12.5" y="14.5" width="7.3" height="2.4"/><rect x="12.5" y="20.7" width="7.3" height="2.3"/></g></svg></div>
<div class="a mt" style="left:280px;top:1076.8px;color:#BBBBBB">More Run/Debug</div>
<div class="a" style="left:1004px;top:1083.8px;width:16px;height:32px"><svg width="16" height="32" viewBox="0 0 16 32"><path d="M4.7,8.5 L12.1,15.8 L4.7,23.1" fill="none" stroke="#BBBBBB" stroke-width="2.3"/></svg></div>
<div class="a" style="left:236px;top:1131.4px;width:786px;height:2px;background:#515151"></div>
<div class="a mt" style="left:280px;top:1140.8px;color:#BBBBBB">Open In</div>
<div class="a" style="left:1004px;top:1147.8px;width:16px;height:32px"><svg width="16" height="32" viewBox="0 0 16 32"><path d="M4.7,8.5 L12.1,15.8 L4.7,23.1" fill="none" stroke="#BBBBBB" stroke-width="2.3"/></svg></div>
<div class="a" style="left:236px;top:1195.4px;width:786px;height:2px;background:#515151"></div>
<div class="a mt" style="left:280px;top:1204.8px;color:#BBBBBB">Local History</div>
<div class="a" style="left:1004px;top:1211.8px;width:16px;height:32px"><svg width="16" height="32" viewBox="0 0 16 32"><path d="M4.7,8.5 L12.1,15.8 L4.7,23.1" fill="none" stroke="#BBBBBB" stroke-width="2.3"/></svg></div>
<div class="a mt" style="left:280px;top:1250.8px;color:#BBBBBB">Repair IDE on File</div>
<div class="a mt" style="left:280px;top:1296.8px;color:#BBBBBB">Reload from Disk</div>
<div class="a" style="left:238px;top:1303.8px;width:32px;height:32px"><svg width="32" height="32" viewBox="0 0 32 32"><g fill="none" stroke="#AFB1B3" stroke-width="3.3"><path d="M9.0,8.7 A10.3,10.3 0 0 1 26.4,13.9"/><path d="M6.07,17.2 A10.3,10.3 0 0 0 23.6,23.3"/></g><path d="M4,4.8 L4,14.6 L13.8,14.6Z M28,17.3 L28,27 L18.1,17.3Z" fill="#AFB1B3"/></svg></div>
<div class="a" style="left:236px;top:1351.4px;width:786px;height:2px;background:#515151"></div>
<div class="a mt" style="left:280px;top:1360.8px;color:#BBBBBB">Compare With...</div>
<div class="a" style="left:238px;top:1367.8px;width:32px;height:32px"><svg width="32" height="32" viewBox="0 0 32 32"><g fill="#3592C4"><path d="M14,9.3 L21.6,1.1 V17.3Z"/><rect x="21" y="7.2" width="9.1" height="4.2"/><path d="M18.1,21.2 L10.3,13.2 V29.4Z"/><rect x="1.9" y="19.2" width="9" height="4.1"/></g></svg></div>
<div class="a" style="left:990.8px;top:1371.8px;width:35px;height:24px"><svg width="35" height="24"><path d="M1.2,9.2 L7.8,2.6 L14.4,9.2" fill="none" stroke="#BBBBBB" stroke-width="2.3"/><text x="23.4" y="21.5" text-anchor="middle" font-family="Liberation Mono" font-size="29" fill="#BBBBBB" stroke="#BBBBBB" stroke-width="0.5" textLength="12.4" lengthAdjust="spacingAndGlyphs">D</text></svg></div>
<div class="a" style="left:236px;top:1415.4px;width:786px;height:2px;background:#515151"></div>
<div class="a mt" style="left:280px;top:1424.8px;color:#BBBBBB">Open Module Settings</div>
<div class="a" style="left:975.2px;top:1435.8px;width:51px;height:24px"><svg width="51" height="24"><text x="7.8" y="21.5" text-anchor="middle" font-family="Liberation Mono" font-size="29" fill="#BBBBBB" stroke="#BBBBBB" stroke-width="0.5" textLength="12.4" lengthAdjust="spacingAndGlyphs">F</text><text x="23.4" y="21.5" text-anchor="middle" font-family="Liberation Mono" font-size="29" fill="#BBBBBB" stroke="#BBBBBB" stroke-width="0.5" textLength="12.4" lengthAdjust="spacingAndGlyphs">1</text><text x="39.0" y="21.5" text-anchor="middle" font-family="Liberation Mono" font-size="29" fill="#BBBBBB" stroke="#BBBBBB" stroke-width="0.5" textLength="12.4" lengthAdjust="spacingAndGlyphs">2</text></svg></div>
<div class="a mt" style="left:280px;top:1470.8px;color:#BBBBBB">Mark Directory as</div>
<div class="a" style="left:1004px;top:1477.8px;width:16px;height:32px"><svg width="16" height="32" viewBox="0 0 16 32"><path d="M4.7,8.5 L12.1,15.8 L4.7,23.1" fill="none" stroke="#BBBBBB" stroke-width="2.3"/></svg></div>
<div class="a mt" style="left:280px;top:1516.8px;color:#BBBBBB">Analyze Dependencies...</div>
<div class="a" style="left:238px;top:1523.8px;width:32px;height:32px"><svg width="32" height="32" viewBox="0 0 32 32"><g fill="none" stroke="#AFB1B3" stroke-width="4"><path d="M5.9,14.5 A9,9 0 1 1 17.4,23.6"/><path d="M21,20.6 L30.5,29.3"/></g><rect x="-0.1" y="20.2" width="4.15" height="10" fill="#62B543"/><rect x="6" y="16.3" width="4" height="13.9" fill="#9AA7B0"/><rect x="12" y="20.2" width="4.1" height="10" fill="#40B6E0"/></svg></div>
<div class="a mt" style="left:280px;top:1562.8px;color:#BBBBBB">Diagrams</div>
<div class="a" style="left:238px;top:1569.8px;width:32px;height:32px"><svg width="32" height="32" viewBox="0 0 32 32"><g fill="#8C9AA3"><rect x="2" y="2.5" width="28" height="5.9"/><rect x="2" y="24.6" width="28" height="5.8"/></g><g fill="#40B6E0"><path d="M4,14.3 L8.9,9.4 L14,14.3Z"/><rect x="7.9" y="14.3" width="2.2" height="10.3"/><path d="M17.95,14.3 L23,9.4 L28,14.3Z"/><rect x="21.9" y="14.8" width="2.2" height="1.7"/><rect x="21.9" y="18.3" width="2.2" height="2.2"/><rect x="21.9" y="22.3" width="2.2" height="2.3"/></g></svg></div>
<div class="a" style="left:1004px;top:1569.8px;width:16px;height:32px"><svg width="16" height="32" viewBox="0 0 16 32"><path d="M4.7,8.5 L12.1,15.8 L4.7,23.1" fill="none" stroke="#BBBBBB" stroke-width="2.3"/></svg></div>
<div class="a" style="left:1042px;top:725px;width:314px;height:658px;background:#3C3F41;border:1px solid #5B5D5E;box-shadow:0 0 16px 1px rgba(0,0,0,0.28)"></div>
<div class="a mt" style="left:1109px;top:737.0px;color:#BBBBBB">clean</div>
<div class="a" style="left:1066px;top:744.0px;width:32px;height:32px"><svg width="32" height="32" viewBox="0 0 32 32"><g transform="translate(0.8,4.8) scale(2)"><path d="M0.2,10 L2.2,0.4 L5,0.4 L4.8,1.3 Q6,0.3 7.4,0.3 Q9.3,0.3 9.3,1.6 Q10.5,0.3 12.2,0.3 Q15.2,0.3 14.7,3 L13.2,10 L10.3,10 L11.6,3.8 Q11.9,2.6 10.9,2.6 Q10,2.6 9.7,3.8 L8.4,10 L5.5,10 L6.8,3.8 Q7.1,2.6 6.1,2.6 Q5.2,2.6 4.9,3.8 L3.1,10 Z" fill="#3A9AC8"/></g><path d="M17.2,11.6 L33,22 L17.2,32.4Z" fill="#AFB1B3" stroke="#3C3F41" stroke-width="1.8"/></svg></div>
<div class="a mt" style="left:1109px;top:783.0px;color:#BBBBBB">validate</div>
<div class="a" style="left:1066px;top:790.0px;width:32px;height:32px"><svg width="32" height="32" viewBox="0 0 32 32"><g transform="translate(0.8,4.8) scale(2)"><path d="M0.2,10 L2.2,0.4 L5,0.4 L4.8,1.3 Q6,0.3 7.4,0.3 Q9.3,0.3 9.3,1.6 Q10.5,0.3 12.2,0.3 Q15.2,0.3 14.7,3 L13.2,10 L10.3,10 L11.6,3.8 Q11.9,2.6 10.9,2.6 Q10,2.6 9.7,3.8 L8.4,10 L5.5,10 L6.8,3.8 Q7.1,2.6 6.1,2.6 Q5.2,2.6 4.9,3.8 L3.1,10 Z" fill="#3A9AC8"/></g><path d="M17.2,11.6 L33,22 L17.2,32.4Z" fill="#AFB1B3" stroke="#3C3F41" stroke-width="1.8"/></svg></div>
<div class="a" style="left:1044px;top:829.0px;width:310px;height:46px;background:#3367C9"></div>
<div class="a mt" style="left:1109px;top:829.0px;color:#FFFFFF">compile</div>
<div class="a" style="left:1066px;top:836.0px;width:32px;height:32px"><svg width="32" height="32" viewBox="0 0 32 32"><g transform="translate(0.8,4.8) scale(2)"><path d="M0.2,10 L2.2,0.4 L5,0.4 L4.8,1.3 Q6,0.3 7.4,0.3 Q9.3,0.3 9.3,1.6 Q10.5,0.3 12.2,0.3 Q15.2,0.3 14.7,3 L13.2,10 L10.3,10 L11.6,3.8 Q11.9,2.6 10.9,2.6 Q10,2.6 9.7,3.8 L8.4,10 L5.5,10 L6.8,3.8 Q7.1,2.6 6.1,2.6 Q5.2,2.6 4.9,3.8 L3.1,10 Z" fill="#3A96C0"/></g><path d="M17.2,11.6 L33,22 L17.2,32.4Z" fill="#AFB1B3" stroke="#3367C9" stroke-width="1.8"/></svg></div>
<div class="a mt" style="left:1109px;top:875.0px;color:#BBBBBB">test</div>
<div class="a" style="left:1066px;top:882.0px;width:32px;height:32px"><svg width="32" height="32" viewBox="0 0 32 32"><g transform="translate(0.8,4.8) scale(2)"><path d="M0.2,10 L2.2,0.4 L5,0.4 L4.8,1.3 Q6,0.3 7.4,0.3 Q9.3,0.3 9.3,1.6 Q10.5,0.3 12.2,0.3 Q15.2,0.3 14.7,3 L13.2,10 L10.3,10 L11.6,3.8 Q11.9,2.6 10.9,2.6 Q10,2.6 9.7,3.8 L8.4,10 L5.5,10 L6.8,3.8 Q7.1,2.6 6.1,2.6 Q5.2,2.6 4.9,3.8 L3.1,10 Z" fill="#3A9AC8"/></g><path d="M17.2,11.6 L33,22 L17.2,32.4Z" fill="#AFB1B3" stroke="#3C3F41" stroke-width="1.8"/></svg></div>
<div class="a mt" style="left:1109px;top:921.0px;color:#BBBBBB">package</div>
<div class="a" style="left:1066px;top:928.0px;width:32px;height:32px"><svg width="32" height="32" viewBox="0 0 32 32"><g transform="translate(0.8,4.8) scale(2)"><path d="M0.2,10 L2.2,0.4 L5,0.4 L4.8,1.3 Q6,0.3 7.4,0.3 Q9.3,0.3 9.3,1.6 Q10.5,0.3 12.2,0.3 Q15.2,0.3 14.7,3 L13.2,10 L10.3,10 L11.6,3.8 Q11.9,2.6 10.9,2.6 Q10,2.6 9.7,3.8 L8.4,10 L5.5,10 L6.8,3.8 Q7.1,2.6 6.1,2.6 Q5.2,2.6 4.9,3.8 L3.1,10 Z" fill="#3A9AC8"/></g><path d="M17.2,11.6 L33,22 L17.2,32.4Z" fill="#AFB1B3" stroke="#3C3F41" stroke-width="1.8"/></svg></div>
<div class="a mt" style="left:1109px;top:967.0px;color:#BBBBBB">verify</div>
<div class="a" style="left:1066px;top:974.0px;width:32px;height:32px"><svg width="32" height="32" viewBox="0 0 32 32"><g transform="translate(0.8,4.8) scale(2)"><path d="M0.2,10 L2.2,0.4 L5,0.4 L4.8,1.3 Q6,0.3 7.4,0.3 Q9.3,0.3 9.3,1.6 Q10.5,0.3 12.2,0.3 Q15.2,0.3 14.7,3 L13.2,10 L10.3,10 L11.6,3.8 Q11.9,2.6 10.9,2.6 Q10,2.6 9.7,3.8 L8.4,10 L5.5,10 L6.8,3.8 Q7.1,2.6 6.1,2.6 Q5.2,2.6 4.9,3.8 L3.1,10 Z" fill="#3A9AC8"/></g><path d="M17.2,11.6 L33,22 L17.2,32.4Z" fill="#AFB1B3" stroke="#3C3F41" stroke-width="1.8"/></svg></div>
<div class="a mt" style="left:1109px;top:1013.0px;color:#BBBBBB">install</div>
<div class="a" style="left:1066px;top:1020.0px;width:32px;height:32px"><svg width="32" height="32" viewBox="0 0 32 32"><g transform="translate(0.8,4.8) scale(2)"><path d="M0.2,10 L2.2,0.4 L5,0.4 L4.8,1.3 Q6,0.3 7.4,0.3 Q9.3,0.3 9.3,1.6 Q10.5,0.3 12.2,0.3 Q15.2,0.3 14.7,3 L13.2,10 L10.3,10 L11.6,3.8 Q11.9,2.6 10.9,2.6 Q10,2.6 9.7,3.8 L8.4,10 L5.5,10 L6.8,3.8 Q7.1,2.6 6.1,2.6 Q5.2,2.6 4.9,3.8 L3.1,10 Z" fill="#3A9AC8"/></g><path d="M17.2,11.6 L33,22 L17.2,32.4Z" fill="#AFB1B3" stroke="#3C3F41" stroke-width="1.8"/></svg></div>
<div class="a mt" style="left:1109px;top:1059.0px;color:#BBBBBB">deploy</div>
<div class="a" style="left:1066px;top:1066.0px;width:32px;height:32px"><svg width="32" height="32" viewBox="0 0 32 32"><g transform="translate(0.8,4.8) scale(2)"><path d="M0.2,10 L2.2,0.4 L5,0.4 L4.8,1.3 Q6,0.3 7.4,0.3 Q9.3,0.3 9.3,1.6 Q10.5,0.3 12.2,0.3 Q15.2,0.3 14.7,3 L13.2,10 L10.3,10 L11.6,3.8 Q11.9,2.6 10.9,2.6 Q10,2.6 9.7,3.8 L8.4,10 L5.5,10 L6.8,3.8 Q7.1,2.6 6.1,2.6 Q5.2,2.6 4.9,3.8 L3.1,10 Z" fill="#3A9AC8"/></g><path d="M17.2,11.6 L33,22 L17.2,32.4Z" fill="#AFB1B3" stroke="#3C3F41" stroke-width="1.8"/></svg></div>
<div class="a mt" style="left:1109px;top:1105.0px;color:#BBBBBB">site</div>
<div class="a" style="left:1066px;top:1112.0px;width:32px;height:32px"><svg width="32" height="32" viewBox="0 0 32 32"><g transform="translate(0.8,4.8) scale(2)"><path d="M0.2,10 L2.2,0.4 L5,0.4 L4.8,1.3 Q6,0.3 7.4,0.3 Q9.3,0.3 9.3,1.6 Q10.5,0.3 12.2,0.3 Q15.2,0.3 14.7,3 L13.2,10 L10.3,10 L11.6,3.8 Q11.9,2.6 10.9,2.6 Q10,2.6 9.7,3.8 L8.4,10 L5.5,10 L6.8,3.8 Q7.1,2.6 6.1,2.6 Q5.2,2.6 4.9,3.8 L3.1,10 Z" fill="#3A9AC8"/></g><path d="M17.2,11.6 L33,22 L17.2,32.4Z" fill="#AFB1B3" stroke="#3C3F41" stroke-width="1.8"/></svg></div>
<div class="a mt" style="left:1109px;top:1151.0px;color:#BBBBBB">clean install</div>
<div class="a" style="left:1066px;top:1158.0px;width:32px;height:32px"><svg width="32" height="32" viewBox="0 0 32 32"><g transform="translate(0.8,4.8) scale(2)"><path d="M0.2,10 L2.2,0.4 L5,0.4 L4.8,1.3 Q6,0.3 7.4,0.3 Q9.3,0.3 9.3,1.6 Q10.5,0.3 12.2,0.3 Q15.2,0.3 14.7,3 L13.2,10 L10.3,10 L11.6,3.8 Q11.9,2.6 10.9,2.6 Q10,2.6 9.7,3.8 L8.4,10 L5.5,10 L6.8,3.8 Q7.1,2.6 6.1,2.6 Q5.2,2.6 4.9,3.8 L3.1,10 Z" fill="#3A9AC8"/></g><path d="M17.2,11.6 L33,22 L17.2,32.4Z" fill="#AFB1B3" stroke="#3C3F41" stroke-width="1.8"/></svg></div>
<div class="a" style="left:1063px;top:1205.6px;width:272px;height:2px;background:#515151"></div>
<div class="a mt" style="left:1109px;top:1215.0px;color:#BBBBBB">Plugins</div>
<div class="a" style="left:1315px;top:1222.0px;width:16px;height:32px"><svg width="16" height="32" viewBox="0 0 16 32"><path d="M4.7,8.5 L12.1,15.8 L4.7,23.1" fill="none" stroke="#BBBBBB" stroke-width="2.3"/></svg></div>
<div class="a" style="left:1063px;top:1269.6px;width:272px;height:2px;background:#515151"></div>
<div class="a mt" style="left:1109px;top:1279.0px;color:#BBBBBB">Reimport</div>
<div class="a" style="left:1066px;top:1286.0px;width:32px;height:32px"><svg width="32" height="32" viewBox="0 0 32 32"><g fill="none" stroke="#AFB1B3" stroke-width="3.3"><path d="M9.0,8.7 A10.3,10.3 0 0 1 26.4,13.9"/><path d="M6.07,17.2 A10.3,10.3 0 0 0 23.6,23.3"/></g><path d="M4,4.8 L4,14.6 L13.8,14.6Z M28,17.3 L28,27 L18.1,17.3Z" fill="#AFB1B3"/></svg></div>
<div class="a mt" style="left:1109px;top:1325.0px;color:#BBBBBB">New Goal...</div>
</body></html>
